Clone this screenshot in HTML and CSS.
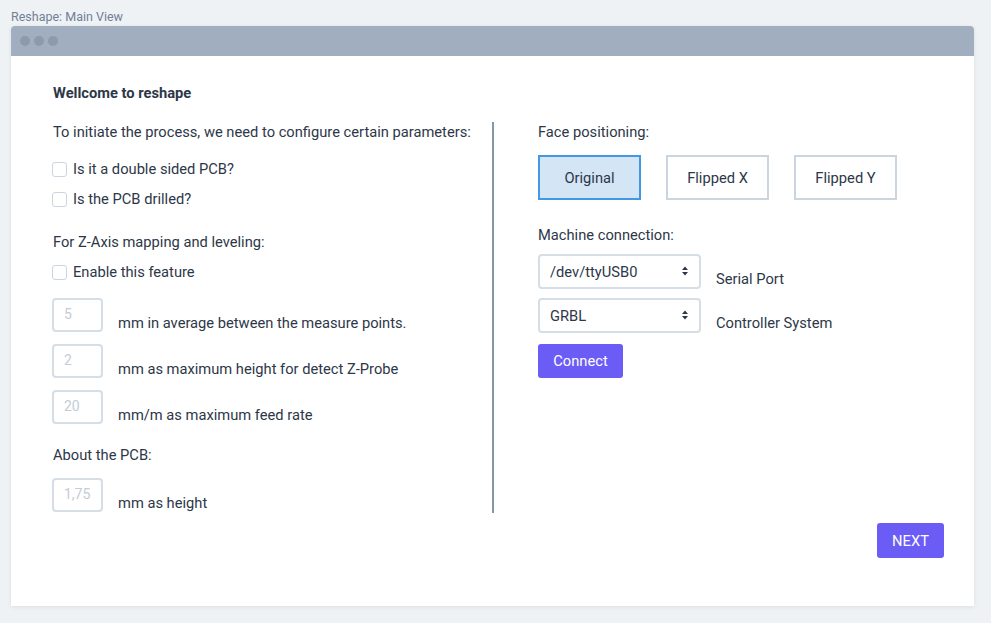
FILE: index.html
```html
<!DOCTYPE html>
<html>
<head>
<meta charset="utf-8">
<link rel="stylesheet" href="styles.css">
</head>
<body>
<div class="page">
  <div class="app-title">Reshape: Main View</div>
  <div class="window">
    <div class="titlebar">
      <span class="dot"></span><span class="dot"></span><span class="dot"></span>
    </div>
    <div class="content">
      <h1 class="heading">Wellcome to reshape</h1>
      <div class="columns">
        <div class="col-left">
          <p class="label">To initiate the process, we need to configure certain parameters:</p>
          <label class="check first"><span class="box"></span>Is it a double sided PCB?</label>
          <label class="check"><span class="box"></span>Is the PCB drilled?</label>
          <p class="label section">For Z-Axis mapping and leveling:</p>
          <label class="check"><span class="box"></span>Enable this feature</label>
          <div class="input-row first-input"><input class="num" placeholder="5"><span class="unit">mm in average between the measure points.</span></div>
          <div class="input-row"><input class="num" placeholder="2"><span class="unit">mm as maximum height for detect Z-Probe</span></div>
          <div class="input-row"><input class="num" placeholder="20"><span class="unit">mm/m as maximum feed rate</span></div>
          <p class="label section2">About the PCB:</p>
          <div class="input-row pcb"><input class="num" placeholder="1,75"><span class="unit">mm as height</span></div>
        </div>
        <div class="divider"></div>
        <div class="col-right">
          <p class="label">Face positioning:</p>
          <div class="faces">
            <button class="face active">Original</button>
            <button class="face">Flipped X</button>
            <button class="face">Flipped Y</button>
          </div>
          <p class="label section-m">Machine connection:</p>
          <div class="select-row first-select">
            <div class="select-wrap">
              <select class="sel"><option>/dev/ttyUSB0</option></select>
              <svg class="arrows" width="8" height="12" viewBox="0 0 8 12"><path d="M4 1.5 L7 5 H1 Z M4 10.5 L1 7 H7 Z" fill="#2d3748"/></svg>
            </div>
            <span class="sel-label">Serial Port</span>
          </div>
          <div class="select-row">
            <div class="select-wrap">
              <select class="sel"><option>GRBL</option></select>
              <svg class="arrows" width="8" height="12" viewBox="0 0 8 12"><path d="M4 1.5 L7 5 H1 Z M4 10.5 L1 7 H7 Z" fill="#2d3748"/></svg>
            </div>
            <span class="sel-label">Controller System</span>
          </div>
          <button class="btn connect">Connect</button>
        </div>
      </div>
      <div class="footer">
        <button class="btn next">NEXT</button>
      </div>
    </div>
  </div>
</div>
</body>
</html>
```
FILE: styles.css
```css
* { box-sizing: border-box; }
html, body { margin: 0; padding: 0; }
body {
  background: #eff2f5;
  font-family: Roboto, "Liberation Sans", sans-serif;
  color: #2d3748;
  font-size: 14.7px;
  width: 991px;
  height: 623px;
  overflow: hidden;
}
.page {
  padding: 9px 17px 17px 11px;
}
.app-title {
  font-size: 12.5px;
  line-height: 16px;
  color: #718096;
  height: 17px;
}
.window {
  background: #fff;
  border-radius: 4px 4px 0 0;
  box-shadow: 0 1px 4px rgba(0,0,0,0.08);
  height: 580px;
  display: flex;
  flex-direction: column;
}
.titlebar {
  height: 30px;
  background: #a0aec0;
  border-radius: 4px 4px 0 0;
  display: flex;
  align-items: center;
  gap: 4px;
  padding-left: 9px;
}
.dot {
  width: 10px;
  height: 10px;
  border-radius: 50%;
  background: #8c9aab;
}
.content {
  flex: 1;
  padding: 27px 30px 0 42px;
  display: flex;
  flex-direction: column;
}
.heading {
  margin: 0;
  font-size: 14.7px;
  font-weight: 700;
  line-height: 20px;
  color: #2d3748;
}
.columns {
  display: flex;
  margin-top: 19px;
}
.col-left {
  width: 439px;
  display: flex;
  flex-direction: column;
  align-items: flex-start;
}
.divider {
  width: 2px;
  background: #8795a8;
  height: 391px;
}
.col-right {
  padding-left: 44px;
  display: flex;
  flex-direction: column;
  align-items: flex-start;
}
.label {
  margin: 0;
  line-height: 20px;
}
.section { margin-top: 23px; }
.section2 { margin-top: 21px; }
.section-m { margin-top: 25px; }
.check {
  display: flex;
  align-items: center;
  line-height: 20px;
  margin-top: 10px;
}
.check.first { margin-top: 17px; }
.box {
  width: 15px;
  height: 15px;
  border: 1.5px solid #cbd5e0;
  border-radius: 3px;
  margin-left: -1px;
  margin-right: 6px;
  background: #fff;
}
.input-row {
  display: flex;
  align-items: flex-end;
  margin-top: 12px;
}
.input-row.first-input { margin-top: 16px; }
.input-row.pcb { margin-top: 13px; }
.num {
  width: 51px;
  height: 34px;
  margin-left: -1px;
  border: 2px solid #d5dde6;
  border-radius: 4px;
  padding: 0 0 3px 10px;
  font-family: inherit;
  font-size: 14px;
  color: #2d3748;
  background: #fff;
  outline: none;
}
.num::placeholder { color: #c3ccd7; }
.unit {
  margin-left: 15px;
  line-height: 20px;
  margin-bottom: -1px;
}
.faces {
  display: flex;
  gap: 25px;
  margin-top: 13px;
}
.face {
  width: 103px;
  height: 45px;
  border: 2px solid #cbd5e0;
  background: #fff;
  font-family: inherit;
  font-size: 14.7px;
  color: #2d3748;
  padding: 0;
}
.face.active {
  background: #d4e5f6;
  border-color: #4299e1;
}
.select-row {
  display: flex;
  align-items: flex-end;
  margin-top: 9px;
}
.select-wrap {
  position: relative;
  width: 163px;
  height: 35px;
}
.sel {
  appearance: none;
  -webkit-appearance: none;
  width: 100%;
  height: 100%;
  border: 2px solid #d5dde6;
  border-radius: 4px;
  background: #fff;
  font-family: inherit;
  font-size: 14.7px;
  color: #2d3748;
  padding: 0 0 0 10px;
  outline: none;
}
.arrows {
  position: absolute;
  right: 12px;
  top: 11px;
}
.sel-label {
  margin-left: 15px;
  line-height: 20px;
}
.btn {
  border: none;
  background: #6b5cf6;
  color: #fff;
  border-radius: 3px;
  font-family: inherit;
  font-size: 14.7px;
  padding: 0;
}
.connect {
  width: 85px;
  height: 34px;
  margin-top: 11px;
}
.footer {
  display: flex;
  justify-content: flex-end;
  margin-top: 10px;
}
.next {
  width: 67px;
  height: 35px;
}
```
